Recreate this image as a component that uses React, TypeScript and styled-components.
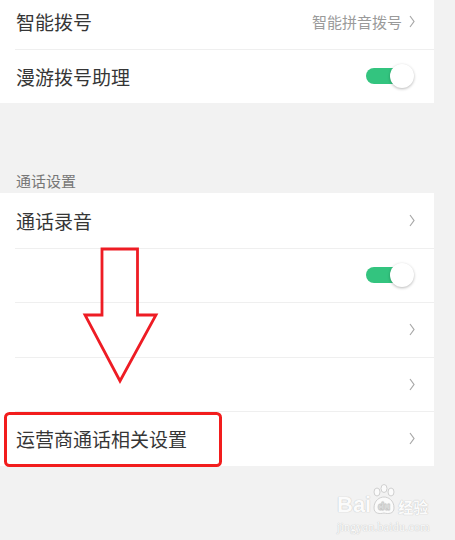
import React from "react";
import styled, { createGlobalStyle } from "styled-components";

const GlobalStyle = createGlobalStyle`
  html, body { margin: 0; padding: 0; background: #f2f2f2; }
  body { font-family: "Noto Sans CJK SC", "Noto Sans", sans-serif; }
`;

const Page = styled.div`
  position: relative;
  width: 455px;
  height: 540px;
  overflow: hidden;
  background: #f2f2f2;
`;

const Panel = styled.div<{ $shift?: number }>`
  width: 434px;
  background: #ffffff;
  margin-top: ${(p) => p.$shift ?? 0}px;
`;

const Row = styled.div<{ $first?: boolean }>`
  box-sizing: border-box;
  height: 54.5px;
  margin-left: 15px;
  padding: 0 19px 0 1px;
  display: flex;
  align-items: center;
  border-top: ${(p) => (p.$first ? "none" : "1px solid #efefef")};
`;

const Label = styled.span`
  flex: 1;
  font-size: 19px;
  color: #363636;
  line-height: 1;
`;

const Value = styled.span`
  font-size: 15px;
  color: #9a9a9a;
  line-height: 1;
  margin-right: 7px;
`;

const SectionHeader = styled.div`
  box-sizing: border-box;
  height: 90px;
  padding: 0 0 5px 16px;
  display: flex;
  align-items: flex-end;
  font-size: 15px;
  line-height: 1;
  color: #777777;
`;

const SwitchBox = styled.div`
  position: relative;
  width: 48px;
  height: 24px;
  display: flex;
  align-items: center;
  margin-right: 1px;
`;

const Track = styled.div`
  position: absolute;
  left: 0;
  top: 4px;
  width: 42px;
  height: 16px;
  border-radius: 8px;
  background: #33c47f;
`;

const Knob = styled.div`
  position: relative;
  margin-left: auto;
  width: 24px;
  height: 24px;
  border-radius: 50%;
  background: #ffffff;
  box-shadow: 0 1px 3px rgba(0, 0, 0, 0.28);
`;

const ChevronSvg = styled.svg`
  width: 6px;
  height: 13px;
  flex: none;
`;

const Overlay = styled.svg`
  position: absolute;
  left: 0;
  top: 0;
  width: 455px;
  height: 540px;
  pointer-events: none;
`;

const Watermark = styled.div`
  position: absolute;
  left: 337px;
  top: 482px;
  display: flex;
  flex-direction: column;
  align-items: flex-start;
  color: #fbfbfb;
  text-shadow: 0 0 1px #c8c8c8, 0 0 1px #c8c8c8;
  font-family: "Liberation Sans", Arial, sans-serif;
`;

const MarkTop = styled.div`
  display: flex;
  align-items: flex-end;
  font-size: 22px;
  font-weight: bold;
  line-height: 1;
  height: 34px;
`;

const MarkCjk = styled.span`
  font-family: "Noto Sans CJK SC", sans-serif;
  font-size: 15px;
  font-weight: bold;
  margin-left: 1px;
  margin-bottom: 2px;
`;

const MarkUrl = styled.div`
  font-size: 12px;
  font-family: "Liberation Serif", serif;
  margin-top: 4px;
  letter-spacing: 0.2px;
`;

const Chevron = () => (
  <ChevronSvg viewBox="0 0 6 13">
    <polyline points="1,1 5,6.5 1,12" fill="none" stroke="#a8a8a8" strokeWidth="1.2" />
  </ChevronSvg>
);

const Switch = () => (
  <SwitchBox>
    <Track />
    <Knob />
  </SwitchBox>
);

const Paw = () => (
  <svg width="26" height="32" viewBox="0 0 26 32">
    <g fill="#fbfbfb" stroke="#d0d0d0" strokeWidth="1">
      <ellipse cx="6" cy="8" rx="3" ry="4" />
      <ellipse cx="13" cy="4.5" rx="3" ry="4" />
      <ellipse cx="20" cy="8" rx="3" ry="4" />
      <path d="M3 24 C3 16 9 13 13 13 C17 13 23 16 23 24 C23 30 17 30 13 29 C9 30 3 30 3 24 Z" />
    </g>
    <text x="13" y="26" textAnchor="middle" fontSize="10" fontWeight="bold" fill="#fbfbfb" stroke="#c8c8c8" strokeWidth="0.4" fontFamily="Liberation Sans, sans-serif">du</text>
  </svg>
);

export default function App() {
  return (
    <>
      <GlobalStyle />
      <Page>
        <Panel $shift={-6}>
          <Row $first>
            <Label>智能拨号</Label>
            <Value>智能拼音拨号</Value>
            <Chevron />
          </Row>
          <Row>
            <Label>漫游拨号助理</Label>
            <Switch />
          </Row>
        </Panel>
        <SectionHeader>通话设置</SectionHeader>
        <Panel>
          <Row $first>
            <Label>通话录音</Label>
            <Chevron />
          </Row>
          <Row>
            <Label />
            <Switch />
          </Row>
          <Row>
            <Label />
            <Chevron />
          </Row>
          <Row>
            <Label />
            <Chevron />
          </Row>
          <Row>
            <Label>运营商通话相关设置</Label>
            <Chevron />
          </Row>
        </Panel>
        <Overlay viewBox="0 0 455 540">
          <polygon
            points="102,249 137.5,249 137.5,315 156,315 120,381 85,315 102,315"
            fill="none"
            stroke="#ee1c24"
            strokeWidth="2.8"
            strokeLinejoin="miter"
          />
          <rect x="5.5" y="413.5" width="215" height="52" rx="4" fill="none" stroke="#f21d1d" strokeWidth="3" />
        </Overlay>
        <Watermark>
          <MarkTop>
            <span>Bai</span>
            <Paw />
            <MarkCjk>经验</MarkCjk>
          </MarkTop>
          <MarkUrl>jingyan.baidu.com</MarkUrl>
        </Watermark>
      </Page>
    </>
  );
}
